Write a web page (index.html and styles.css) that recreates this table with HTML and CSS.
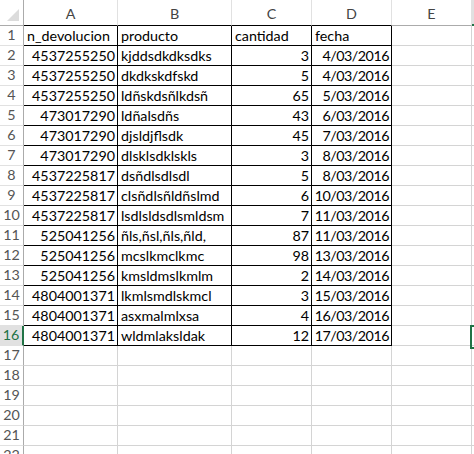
FILE: index.html
```html
<!DOCTYPE html>
<html lang="es">
<head>
<meta charset="utf-8">
<title>Hoja</title>
<link rel="stylesheet" href="styles.css">
</head>
<body>
<div class="sheet">
  <div class="hd corner"><span class="tri"></span></div>
  <div class="hd col bb">A</div>
  <div class="hd col bb">B</div>
  <div class="hd col bb">C</div>
  <div class="hd col bb">D</div>
  <div class="hd col">E</div>
  <div class="hd col sel-col"></div>

  <div class="rh">1</div><div class="c d">n_devolucion</div><div class="c d">producto</div><div class="c d">cantidad</div><div class="c d">fecha</div><div class="c"></div><div class="c"></div>
  <div class="rh">2</div><div class="c d n">4537255250</div><div class="c d">kjddsdkdksdks</div><div class="c d n">3</div><div class="c d n dt">4/03/2016</div><div class="c"></div><div class="c"></div>
  <div class="rh">3</div><div class="c d n">4537255250</div><div class="c d">dkdkskdfskd</div><div class="c d n">5</div><div class="c d n dt">4/03/2016</div><div class="c"></div><div class="c"></div>
  <div class="rh">4</div><div class="c d n">4537255250</div><div class="c d">ldñskdsñlkdsñ</div><div class="c d n">65</div><div class="c d n dt">5/03/2016</div><div class="c"></div><div class="c"></div>
  <div class="rh">5</div><div class="c d n">473017290</div><div class="c d">ldñalsdñs</div><div class="c d n">43</div><div class="c d n dt">6/03/2016</div><div class="c"></div><div class="c"></div>
  <div class="rh">6</div><div class="c d n">473017290</div><div class="c d">djsldjflsdk</div><div class="c d n">45</div><div class="c d n dt">7/03/2016</div><div class="c"></div><div class="c"></div>
  <div class="rh">7</div><div class="c d n">473017290</div><div class="c d">dlsklsdklskls</div><div class="c d n">3</div><div class="c d n dt">8/03/2016</div><div class="c"></div><div class="c"></div>
  <div class="rh">8</div><div class="c d n">4537225817</div><div class="c d">dsñdlsdlsdl</div><div class="c d n">5</div><div class="c d n dt">8/03/2016</div><div class="c"></div><div class="c"></div>
  <div class="rh">9</div><div class="c d n">4537225817</div><div class="c d">clsñdlsñldñslmd</div><div class="c d n">6</div><div class="c d n dt">10/03/2016</div><div class="c"></div><div class="c"></div>
  <div class="rh">10</div><div class="c d n">4537225817</div><div class="c d">lsdlsldsdlsmldsm</div><div class="c d n">7</div><div class="c d n dt">11/03/2016</div><div class="c"></div><div class="c"></div>
  <div class="rh">11</div><div class="c d n">525041256</div><div class="c d">ñls,ñsl,ñls,ñld,</div><div class="c d n">87</div><div class="c d n dt">11/03/2016</div><div class="c"></div><div class="c"></div>
  <div class="rh">12</div><div class="c d n">525041256</div><div class="c d">mcslkmclkmc</div><div class="c d n">98</div><div class="c d n dt">13/03/2016</div><div class="c"></div><div class="c"></div>
  <div class="rh">13</div><div class="c d n">525041256</div><div class="c d">kmsldmslkmlm</div><div class="c d n">2</div><div class="c d n dt">14/03/2016</div><div class="c"></div><div class="c"></div>
  <div class="rh">14</div><div class="c d n">4804001371</div><div class="c d">lkmlsmdlskmcl</div><div class="c d n">3</div><div class="c d n dt">15/03/2016</div><div class="c"></div><div class="c"></div>
  <div class="rh">15</div><div class="c d n">4804001371</div><div class="c d">asxmalmlxsa</div><div class="c d n">4</div><div class="c d n dt">16/03/2016</div><div class="c"></div><div class="c"></div>
  <div class="rh sel-row">16</div><div class="c d n">4804001371</div><div class="c d">wldmlaksldak</div><div class="c d n">12</div><div class="c d n dt">17/03/2016</div><div class="c"></div><div class="c active"></div>
  <div class="rh">17</div><div class="c"></div><div class="c"></div><div class="c"></div><div class="c"></div><div class="c"></div><div class="c"></div>
  <div class="rh">18</div><div class="c"></div><div class="c"></div><div class="c"></div><div class="c"></div><div class="c"></div><div class="c"></div>
  <div class="rh">19</div><div class="c"></div><div class="c"></div><div class="c"></div><div class="c"></div><div class="c"></div><div class="c"></div>
  <div class="rh">20</div><div class="c"></div><div class="c"></div><div class="c"></div><div class="c"></div><div class="c"></div><div class="c"></div>
  <div class="rh">21</div><div class="c"></div><div class="c"></div><div class="c"></div><div class="c"></div><div class="c"></div><div class="c"></div>
  <div class="rh">22</div><div class="c"></div><div class="c"></div><div class="c"></div><div class="c"></div><div class="c"></div><div class="c"></div>
</div>
</body>
</html>
```

FILE: styles.css
```css
html, body {
  margin: 0;
  padding: 0;
  background: #ffffff;
  height: 454px;
  overflow: hidden;
}

.sheet {
  display: grid;
  grid-template-columns: 24px 94px 114px 80px 80px 80px 1fr;
  grid-template-rows: 26px;
  grid-auto-rows: 20px;
  font-family: Lato, "Open Sans", sans-serif;
  font-size: 14.3px;
  color: #000;
}

.hd {
  box-sizing: border-box;
  background: #ffffff;
  border-right: 1px solid #e1e1e1;
  border-bottom: 1px solid #ababab;
  color: #444;
  display: flex;
  align-items: center;
  justify-content: center;
  padding-top: 1px;
}

.corner {
  position: relative;
  border-right: 1px solid #ababab;
}

.tri {
  position: absolute;
  right: 4px;
  bottom: 4px;
  width: 0;
  height: 0;
  border-left: 12px solid transparent;
  border-bottom: 12px solid #dcdcdc;
}

.hd.bb {
  border-bottom-color: #000;
}

.sel-col {
  background: #e1e1e1;
  border-bottom: 2px solid #217346;
}

.rh {
  box-sizing: border-box;
  border-right: 1px solid #ababab;
  border-bottom: 1px solid #e1e1e1;
  color: #555;
  display: flex;
  align-items: flex-end;
  justify-content: center;
  padding-bottom: 1px;
  line-height: 18px;
}

.rh.sel-row {
  background: #e1e1e1;
  color: #217346;
  border-right: 2px solid #217346;
}

.c {
  box-sizing: border-box;
  border-right: 1px solid #d4d4d4;
  border-bottom: 1px solid #d4d4d4;
  display: flex;
  align-items: flex-end;
  padding: 0 2px 0 3px;
  line-height: 18px;
  white-space: nowrap;
  overflow: hidden;
}

.c.d {
  border-right-color: #000;
  border-bottom-color: #000;
}

.c.n {
  justify-content: flex-end;
  padding-right: 2px;
}

.c.dt {
  letter-spacing: -0.5px;
}

.c.active {
  position: relative;
  overflow: visible;
}

.c.active::before {
  content: "";
  position: absolute;
  left: -2px;
  top: -1px;
  width: 80px;
  height: 20px;
  border: 2px solid #217346;
}
```
